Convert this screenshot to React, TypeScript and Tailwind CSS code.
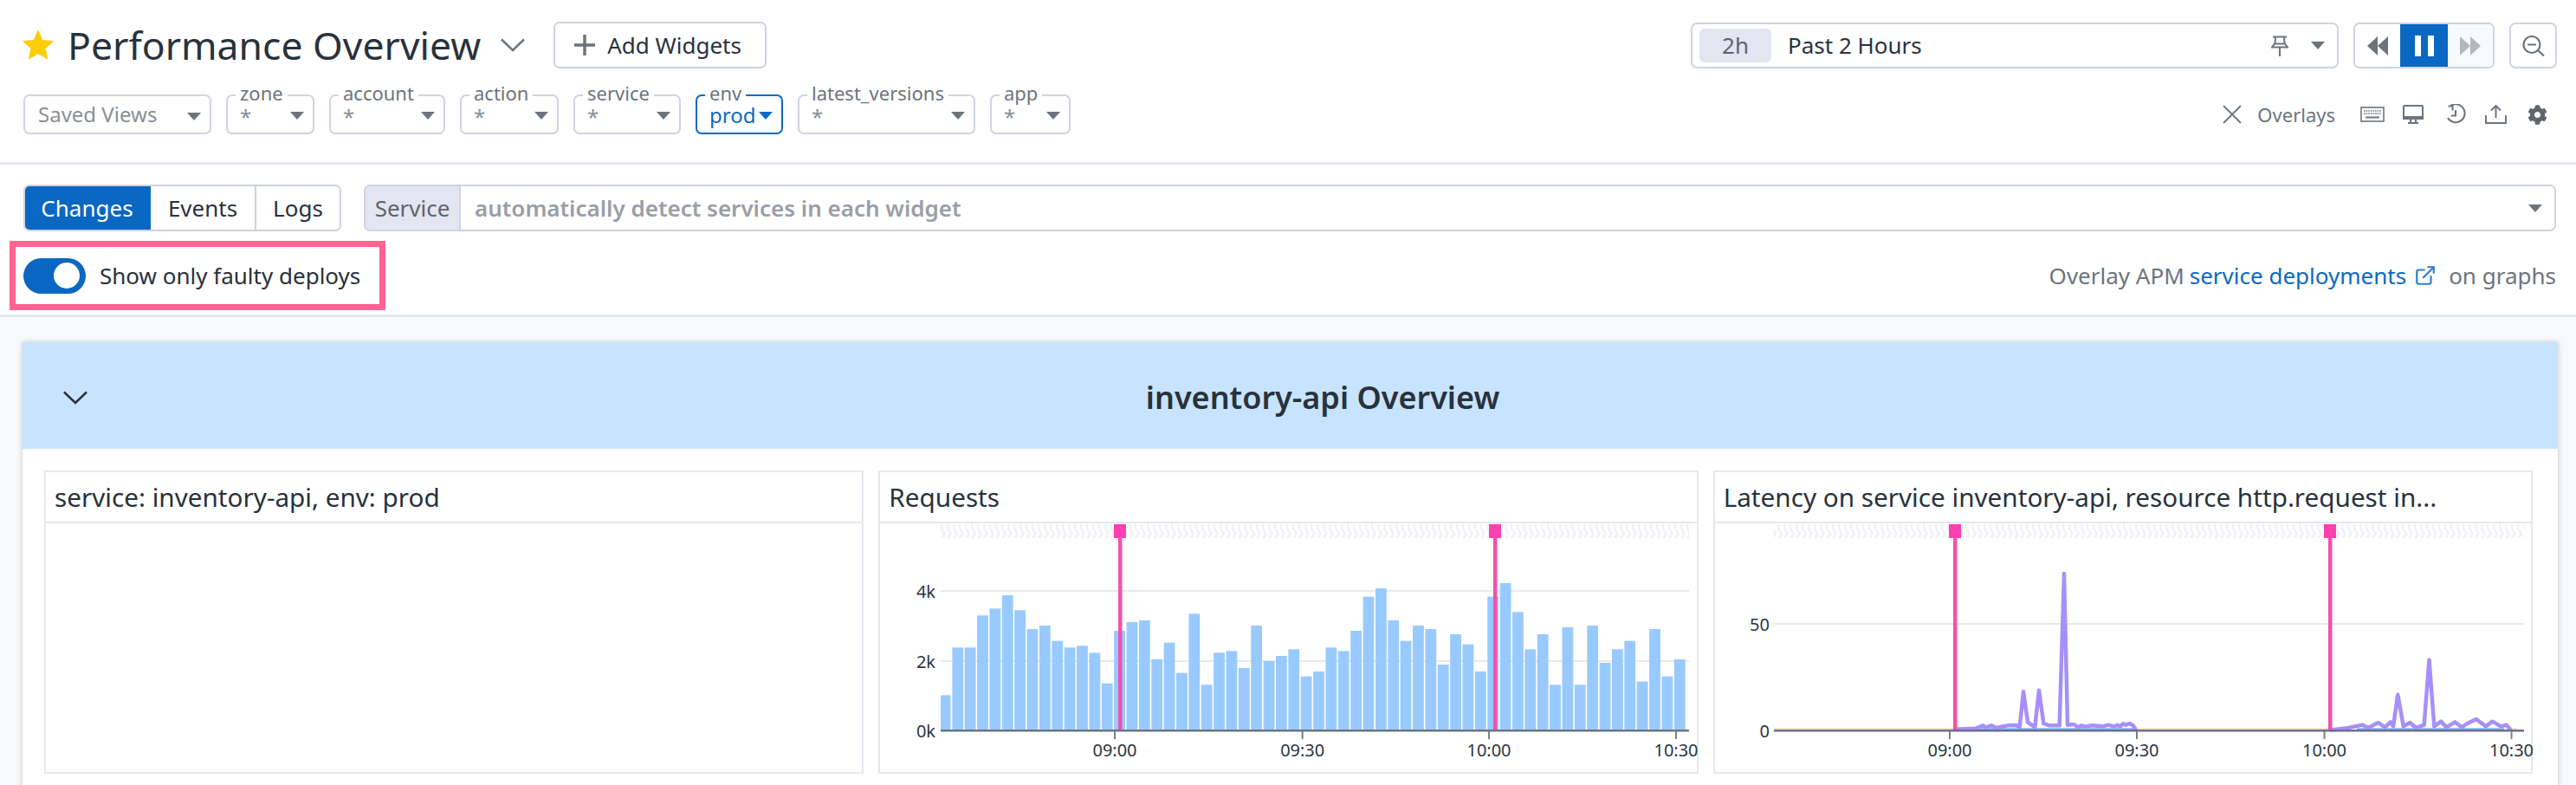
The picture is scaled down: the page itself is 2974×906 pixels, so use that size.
import { ExternalLink } from "lucide-react";
import { FaCog } from "react-icons/fa";

const BAR_TOPS = [
  607, 442, 442, 331, 307, 261, 313, 378, 366, 419, 442, 436, 460, 566, 384, 354, 348, 483, 425, 530, 325, 571, 460,
  454, 513, 366, 489, 471, 448, 542, 525, 442, 454, 384, 266, 237, 348, 419, 366, 378, 501, 396, 431, 525, 266, 219,
  319, 448, 396, 571, 372, 571, 366, 495, 448, 419, 560, 378, 542, 483,
];

// zoomed sample points of the latency series, converted to page px below
const SEG_A = [
  [225, 425], [300, 422], [325, 412], [335, 418], [355, 412], [370, 420], [410, 412], [440, 411], [452, 418],
  [465, 295], [480, 400], [505, 418], [519, 290], [535, 405], [555, 412], [590, 412], [606, -114], [618, 410],
  [640, 408], [655, 418], [665, 412], [680, 416], [700, 412], [740, 415], [760, 410], [780, 416], [790, 410],
  [800, 416], [810, 406], [820, 410], [832, 405], [845, 412], [855, 428],
].map(([x, y]) => `${2180 + x / 3},${700 + y / 3}`);

const SEG_B = [
  [1127, 938], [1160, 930], [1185, 920], [1195, 930], [1213, 912], [1225, 928], [1235, 910], [1240, 925],
  [1248, 815], [1258, 925], [1270, 912], [1280, 930], [1295, 920], [1304, 695], [1313, 925], [1325, 908],
  [1335, 928], [1350, 910], [1362, 928], [1372, 915], [1388, 900], [1405, 925], [1417, 908], [1432, 925],
  [1442, 920], [1450, 938],
].map(([x, y]) => `${1960 + x / 1.546},${530 + y / 3}`);

function Caret({ className = "text-[#6d747c]" }: { className?: string }) {
  return (
    <svg width="16" height="9" viewBox="0 0 16 9" className={className}>
      <path d="M0 0h16L8 9z" fill="currentColor" />
    </svg>
  );
}

function Chevron({ color, w = 28 }: { color: string; w?: number }) {
  return (
    <svg width={w} height="16" viewBox="0 0 28 16" fill="none" stroke={color} strokeWidth="2.5">
      <path d="M1 1.5 14 14 27 1.5" />
    </svg>
  );
}

function Filter({
  label,
  value = "*",
  width,
  active,
}: {
  label: string;
  value?: string;
  width: string;
  active?: boolean;
}) {
  return (
    <div
      className={`relative flex h-[46px] items-center justify-between rounded-[7px] border-2 pr-[10px] pl-[14px] ${width} ${
        active ? "border-[#0b69c2]" : "border-[#d0d3e4]"
      }`}
    >
      <span className="absolute top-[-14px] left-[9px] bg-white px-[5px] text-[22px] leading-[20px] text-[#6d747c]">
        {label}
      </span>
      {active ? (
        <span className="mt-[2px] text-[24px] leading-[20px] text-[#0b69c2]">{value}</span>
      ) : (
        <span className="mt-[5px] text-[24px] leading-[20px] text-[#8a9097]">{value}</span>
      )}
      <span className={active ? "mt-[2px] -ml-[4px]" : "mt-[2px]"}>
        <Caret className={active ? "text-[#0b69c2]" : "text-[#6d747c]"} />
      </span>
    </div>
  );
}

function Hatch({ id }: { id: string }) {
  return (
    <pattern id={id} width="7" height="16" patternUnits="userSpaceOnUse">
      <path d="M0 0 4.500 8 0 16" fill="none" stroke="#f1f2f6" strokeWidth="3" />
    </pattern>
  );
}

function Marker({ x }: { x: number }) {
  return (
    <>
      <rect x={x - 2} y={605} width={4.5} height={238} fill="#f252ae" />
      <rect x={x - 7} y={605} width={14} height={16} fill="#ff40b0" />
    </>
  );
}

function Ticks({ xs, labels = ["09:00", "09:30", "10:00", "10:30"] }: { xs: number[]; labels?: string[] }) {
  return (
    <>
      {xs.map((x, i) => (
        <g key={x}>
          <rect x={x - 1} y={844} width={2} height={9} fill="#7a8089" />
          <text x={x} y={873} textAnchor="middle" fontSize="20" fill="#2b3640">
            {labels[i]}
          </text>
        </g>
      ))}
    </>
  );
}

function RequestsChart() {
  return (
    <svg viewBox="1015 604 943 288" width="943" height="288" className="block overflow-visible">
      <defs>
        <Hatch id="hatch-a" />
      </defs>
      <rect x={1085} y={605} width={864} height={16} fill="url(#hatch-a)" />
      <rect x={1085} y={681} width={864} height={2} fill="#e8e9ee" />
      <rect x={1085} y={762} width={864} height={2} fill="#e8e9ee" />
      {BAR_TOPS.map((t, i) => (
        <rect
          key={i}
          x={i === 0 ? 1085 : 1085 + i * 14.37 - 1}
          y={600 + t / 3}
          width={i === 0 ? 11.5 : 12.8}
          height={(728 - t) / 3}
          fill="#99caff"
        />
      ))}
      <Marker x={1292} />
      <Marker x={1725} />
      <rect x={1085} y={842} width={864} height={2.5} fill="#6e7582" />
      <text x={1079} y={690} textAnchor="end" fontSize="20" fill="#2b3640">4k</text>
      <text x={1079} y={771} textAnchor="end" fontSize="20" fill="#2b3640">2k</text>
      <text x={1079} y={851} textAnchor="end" fontSize="20" fill="#2b3640">0k</text>
      <Ticks xs={[1286, 1502.7, 1718, 1934]} />
    </svg>
  );
}

function LatencyChart() {
  return (
    <svg viewBox="1979 604 943 288" width="943" height="288" className="block overflow-visible">
      <defs>
        <Hatch id="hatch-b" />
      </defs>
      <rect x={2047} y={605} width={866} height={16} fill="url(#hatch-b)" />
      <rect x={2047} y={719} width={866} height={2} fill="#e8e9ee" />
      <path d="M2047 841H2256M2466 841H2689M2895 841H2905" stroke="#f3d9b4" strokeWidth="1.500" fill="none" />
      <path d="M2280 841.5H2466M2720 841.5H2890" stroke="#7db4f0" strokeWidth="2.500" fill="none" />
      <polyline points={SEG_A.join(" ")} fill="none" stroke="#a78ffb" strokeWidth="4.500" strokeLinejoin="round" />
      <polyline points={SEG_B.join(" ")} fill="none" stroke="#a78ffb" strokeWidth="4.500" strokeLinejoin="round" />
      <Marker x={2256} />
      <Marker x={2689} />
      <rect x={2047} y={842} width={866} height={2.5} fill="#6e6f8c" />
      <text x={2042} y={728} textAnchor="end" fontSize="20" fill="#2b3640">50</text>
      <text x={2042} y={851} textAnchor="end" fontSize="20" fill="#2b3640">0</text>
      <Ticks xs={[2250, 2466, 2682.5, 2898.5]} />
    </svg>
  );
}

function Widget({ title, children }: { title: string; children?: React.ReactNode }) {
  return (
    <div className="h-[350px] border-2 border-[#e6e8f0]">
      <div className="h-[59px] border-b-2 border-[#e6e8f0] px-[10px] pt-[10px] text-[29.7px] leading-[38px] whitespace-nowrap text-[#28323c]">
        {title}
      </div>
      {children}
    </div>
  );
}

export default function App() {
  return (
    <div className="h-[906px] w-[2974px] overflow-hidden bg-[#f8f9fb] font-['Noto_Sans',sans-serif] text-[#28323c]">
      <header className="flex h-[190px] justify-between border-b-[3px] border-[#e6e8f0] bg-white">
        <div className="pt-[25px] pl-[27px]">
          <div className="flex h-[54px] items-center">
            <svg width="38" height="36" viewBox="0 0 24 23" className="-ml-[2px]">
              <path
                d="M12 0l3.4 7.6 8.2.9-6.1 5.6 1.700 8.100L12 18l-7.200 4.200 1.700-8.100L.4 8.500l8.200-.9z"
                fill="#fdcd0a"
              />
            </svg>
            <h1 className="ml-[15px] text-[44.5px] leading-[54px] font-normal whitespace-nowrap">
              Performance Overview
            </h1>
            <span className="ml-[23px]">
              <Chevron color="#6d747c" />
            </span>
            <button className="ml-[33px] flex h-[54px] w-[246px] items-center rounded-[7px] border-2 border-[#d0d3e4] pl-[22px] text-[26px]">
              <svg width="24" height="24" viewBox="0 0 24 24" fill="none" stroke="#6d747c" strokeWidth="3.500">
                <path d="M12 0v24M0 12h24" />
              </svg>
              <span className="ml-[14px]">Add Widgets</span>
            </button>
          </div>
          <div className="mt-[30px] flex gap-[17px]">
            <div className="flex h-[46px] w-[217px] items-center justify-between rounded-[7px] border-2 border-[#d0d3e4] pr-[10px] pl-[15px] text-[24px] text-[#8a9097]">
              Saved Views
              <span className="mt-[4px]">
                <Caret />
              </span>
            </div>
            <Filter label="zone" width="w-[102px]" />
            <Filter label="account" width="w-[134px]" />
            <Filter label="action" width="w-[114px]" />
            <Filter label="service" width="w-[124px]" />
            <Filter label="env" value="prod" width="w-[101px]" active />
            <Filter label="latest_versions" width="w-[205px]" />
            <Filter label="app" width="w-[93px]" />
          </div>
        </div>
        <div className="flex w-[1000px] flex-col items-end pt-[26px] pr-[22px]">
          <div className="flex h-[53px] items-stretch">
            <div className="flex w-[748px] items-center rounded-[7px] border-2 border-[#d0d3e4] pl-[8px] text-[26px]">
              <span className="flex h-[39px] w-[83px] items-center justify-center rounded-[6px] bg-[#e3e5f0] text-[#5d646d]">
                2h
              </span>
              <span className="ml-[19px]">Past 2 Hours</span>
              <svg width="20" height="24" viewBox="0 0 20 24" fill="none" stroke="#6d747c" strokeWidth="2" className="ml-auto">
                <path d="M2 1.500h16M5 1.500l-.5 8M15 1.500l.5 8M1 13.500h18L16 9.500H4zM10 13.500V24" />
              </svg>
              <span className="mr-[14px] ml-[26px]">
                <Caret />
              </span>
            </div>
            <div className="ml-[17px] flex w-[163px] overflow-hidden rounded-[7px] border-2 border-[#d0d3e4]">
              <span className="flex w-[52px] items-center justify-center">
                <svg width="24" height="22" viewBox="0 0 24 22" fill="#6d747c">
                  <path d="M12 0v22L0 11zM24 0v22L12 11z" />
                </svg>
              </span>
              <span className="-my-[2px] flex w-[55px] items-center justify-center gap-[8px] bg-[#0a67c2]">
                <span className="h-[24px] w-[7px] bg-white" />
                <span className="h-[24px] w-[7px] bg-white" />
              </span>
              <span className="flex flex-1 items-center justify-center bg-[#f8f9fb]">
                <svg width="24" height="22" viewBox="0 0 24 22" fill="#b3b8bd">
                  <path d="M0 0v22L12 11zM12 0v22L24 11z" />
                </svg>
              </span>
            </div>
            <div className="ml-[17px] flex w-[55px] items-center justify-center rounded-[7px] border-2 border-[#d0d3e4]">
              <svg width="26" height="24" viewBox="0 0 26 24" fill="none" stroke="#6d747c" strokeWidth="2.200">
                <circle cx="11" cy="10.500" r="9.500" />
                <path d="M6 10.500h10M18 17l7 6.500" />
              </svg>
            </div>
          </div>
          <div className="mt-[39px] flex h-[28px] items-center text-[#6d747c]">
            <svg width="22" height="22" viewBox="0 0 22 22" fill="none" stroke="#6d747c" strokeWidth="1.800" className="mr-[18px]">
              <path d="M1 1l20 20M21 1 1 21" />
            </svg>
            <span className="text-[22px]">Overlays</span>
            <svg width="28" height="18" viewBox="0 0 28 18" fill="none" stroke="#6d747c" strokeWidth="1.600" className="ml-[29px]">
              <rect x="1" y="1" width="26" height="16" />
              <path d="M4 5h20M4 8h20" strokeDasharray="1.600 1" />
              <path d="M6 12.500h16" strokeWidth="2" />
            </svg>
            <svg width="24" height="22" viewBox="0 0 24 22" fill="none" stroke="#6d747c" strokeWidth="2" className="ml-[21px]">
              <path d="M1 14V2a1 1 0 0 1 1-1h20a1 1 0 0 1 1 1v12zM1 14v2h22v-2M9 16v4M15 16v4M6 21h12" />
            </svg>
            <svg width="24" height="24" viewBox="0 0 24 24" fill="none" stroke="#6d747c" strokeWidth="2" className="ml-[25px]">
              <path d="M3.500 2.500h5v5M5 3a10.500 10.500 0 1 1-2 13M12 7v6.500H7" />
            </svg>
            <svg width="25" height="22" viewBox="0 0 25 22" fill="none" stroke="#6d747c" strokeWidth="2" className="ml-[22px]">
              <path d="M12.500 15V1.500M7 6.500l5.500-5.500 5.500 5.500M1 12v9h23v-9" />
            </svg>
            <FaCog size={23} className="mr-[11px] ml-[24px] text-[#5f666e]" />
          </div>
        </div>
      </header>

      <section className="border-b-[3px] border-[#e6e8f0] bg-white pt-[23px] pb-[5px]">
        <div className="flex h-[54px] pr-[23px] pl-[27px] text-[26px]">
          <div className="flex w-[367px] overflow-hidden rounded-[7px] border-2 border-[#d0d3e4]">
            <span className="-my-[2px] -ml-[2px] flex w-[147px] items-center justify-center bg-[#0a67c2] text-white">
              Changes
            </span>
            <span className="flex w-[122px] items-center justify-center border-r-2 border-[#d0d3e4]">Events</span>
            <span className="flex flex-1 items-center justify-center">Logs</span>
          </div>
          <div className="ml-[26px] flex flex-1 overflow-hidden rounded-[7px] border-2 border-[#d0d3e4]">
            <span className="flex w-[110px] items-center justify-center border-r-2 border-[#d0d3e4] bg-[#e3e5f0] text-[#5d646d]">
              Service
            </span>
            <span className="ml-[16px] flex items-center font-semibold text-[#9a9ea6]">
              automatically detect services in each widget
            </span>
            <span className="mt-[21px] mr-[14px] ml-auto">
              <Caret />
            </span>
          </div>
        </div>
        <div className="mt-[11px] flex items-center justify-between pr-[23px] pl-[11px]">
          <div className="flex h-[80px] w-[434px] items-center border-[7px] border-[#ff6492] pl-[9px]">
            <span className="flex h-[41px] w-[72px] items-center justify-end rounded-full bg-[#0a67c2] pr-[7px]">
              <span className="h-[30px] w-[30px] rounded-full bg-white" />
            </span>
            <span className="ml-[16px] text-[26px] whitespace-nowrap">Show only faulty deploys</span>
          </div>
          <div className="flex items-center text-[26px] text-[#6d747c]">
            Overlay APM <span className="ml-[6px] text-[#0b69c2]">service deployments</span>
            <ExternalLink size={26} strokeWidth={2} className="ml-[9px] text-[#2f7fcb]" />
            <span className="ml-[14px]">on graphs</span>
          </div>
        </div>
      </section>

      <main className="mt-[29px] ml-[26px] h-[600px] w-[2927px] bg-white shadow-[0_0_6px_rgba(0,0,0,0.22)]">
        <div className="relative flex h-[123px] items-center justify-center bg-[#c8e3fd] pl-[75px]">
          <span className="absolute top-[56px] left-[47px]">
            <Chevron color="#28323c" />
          </span>
          <h2 className="mt-[4px] text-[36px] font-semibold">inventory-api Overview</h2>
        </div>
        <div className="grid grid-cols-3 gap-[17px] pt-[25px] pr-[29px] pl-[25px]">
          <Widget title="service: inventory-api, env: prod" />
          <Widget title="Requests">
            <RequestsChart />
          </Widget>
          <Widget title="Latency on service inventory-api, resource http.request in...">
            <LatencyChart />
          </Widget>
        </div>
      </main>
    </div>
  );
}
